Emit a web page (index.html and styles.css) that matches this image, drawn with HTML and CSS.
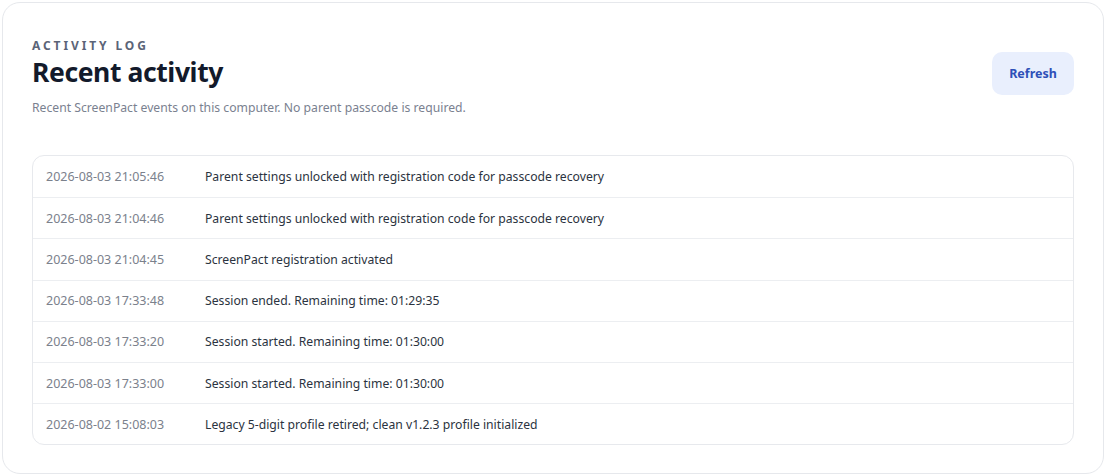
FILE: index.html
```html
<!DOCTYPE html>
<html lang="en">
<head>
<meta charset="utf-8">
<title>Recent activity</title>
<link rel="stylesheet" href="styles.css">
</head>
<body>
<section class="card">
  <header class="head">
    <div class="head-text">
      <div class="eyebrow">ACTIVITY LOG</div>
      <h1 class="title">Recent activity</h1>
      <p class="subtitle">Recent ScreenPact events on this computer. No parent passcode is required.</p>
    </div>
    <button class="refresh" type="button">Refresh</button>
  </header>
  <div class="log">
    <div class="row"><span class="time">2026-08-03 21:05:46</span><span class="msg">Parent settings unlocked with registration code for passcode recovery</span></div>
    <div class="row"><span class="time">2026-08-03 21:04:46</span><span class="msg">Parent settings unlocked with registration code for passcode recovery</span></div>
    <div class="row"><span class="time">2026-08-03 21:04:45</span><span class="msg">ScreenPact registration activated</span></div>
    <div class="row"><span class="time">2026-08-03 17:33:48</span><span class="msg">Session ended. Remaining time: 01:29:35</span></div>
    <div class="row"><span class="time">2026-08-03 17:33:20</span><span class="msg">Session started. Remaining time: 01:30:00</span></div>
    <div class="row"><span class="time">2026-08-03 17:33:00</span><span class="msg">Session started. Remaining time: 01:30:00</span></div>
    <div class="row"><span class="time">2026-08-02 15:08:03</span><span class="msg">Legacy 5-digit profile retired; clean v1.2.3 profile initialized</span></div>
  </div>
</section>
</body>
</html>
```

FILE: styles.css
```css
* { box-sizing: border-box; }
html, body { margin: 0; padding: 0; background: #ffffff; }
body {
  font-family: "Noto Sans", "Open Sans", Arial, sans-serif;
  color: #1f2937;
  padding: 2px;
}
.card {
  width: 1102px;
  height: 472px;
  border: 1px solid #e6e8ec;
  border-radius: 18px;
  background: #ffffff;
  padding: 35px 29px 0 29px;
}
.head {
  display: flex;
  justify-content: space-between;
  align-items: flex-start;
}
.eyebrow {
  font-size: 12px;
  font-weight: 700;
  letter-spacing: 2.9px;
  color: #5b6477;
  line-height: 16px;
}
.title {
  margin: 0;
  font-size: 26.5px;
  font-weight: 700;
  color: #131a2b;
  line-height: 36px;
  letter-spacing: -0.4px;
}
.subtitle {
  margin: 9px 0 0 0;
  font-size: 12.2px;
  color: #7a8190;
  line-height: 17px;
}
.refresh {
  margin-top: 14px;
  width: 82px;
  height: 43px;
  border: none;
  border-radius: 10px;
  background: #e9effd;
  color: #2d50b8;
  font-family: inherit;
  font-size: 12.5px;
  font-weight: 700;
  cursor: pointer;
}
.log {
  margin-top: 39px;
  border: 1px solid #e7e9ed;
  border-radius: 12px;
  overflow: hidden;
}
.row {
  display: grid;
  grid-template-columns: 172px 1fr;
  align-items: center;
  height: 41.2px;
  border-top: 1px solid #eceef1;
  font-size: 12.2px;
}
.row:first-child { border-top: none; }
.time {
  padding-left: 13px;
  color: #7b818c;
  font-size: 12.5px;
}
.msg {
  color: #2b3340;
}
```
